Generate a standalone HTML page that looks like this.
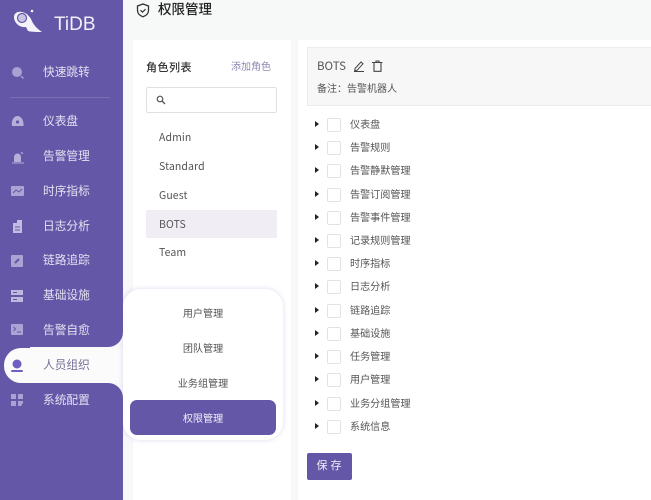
<!DOCTYPE html>
<html lang="zh">
<head>
<meta charset="utf-8">
<title>权限管理</title>
<style>
html,body{margin:0;padding:0;width:651px;height:500px;overflow:hidden;background:#f7f8f8;}
body{position:relative;font-family:"Liberation Sans","Noto Sans CJK SC",sans-serif;color:#444;}
.a{position:absolute;white-space:nowrap;}
.sb{position:absolute;left:0;width:123px;background:#6557a8;}
.nav{position:absolute;left:43px;font-size:11.7px;line-height:16px;color:#e4e1f0;white-space:nowrap;}
.ic{position:absolute;left:11px;}
.role{position:absolute;left:159px;font-family:"Noto Sans CJK SC",sans-serif;font-size:10.5px;line-height:16px;color:#555;letter-spacing:.1px;}
.t{position:absolute;left:350px;font-size:10.1px;line-height:14px;color:#555;white-space:nowrap;margin-top:1px;}
.cb{position:absolute;left:327px;width:12px;height:12px;background:#fff;border:1px solid #e2e2e2;border-radius:2px;}
.ar{position:absolute;left:315px;width:0;height:0;border-left:4px solid #222;border-top:3px solid transparent;border-bottom:3px solid transparent;}
.m{position:absolute;left:123px;width:160px;text-align:center;font-size:10.1px;line-height:14px;color:#555;margin-top:1px;}
</style>
</head>
<body>
<div class="sb" style="top:0;height:347px;border-bottom-right-radius:15px;"></div>
<div class="sb" style="top:383px;height:117px;border-top-right-radius:15px;"></div>
<div class="a" style="left:0;top:340px;width:30px;height:50px;background:#6557a8;"></div>
<div class="a" style="left:4px;top:348px;width:125px;height:35px;background:#fbfbfc;border-radius:17px 0 0 17px;"></div>

<svg class="a" style="left:13px;top:8px" width="30" height="26" viewBox="0 0 30 26">
<path d="M1 9C1 5 5 3 9 4c5 1 7 4 9 7 2 5 5 9 11 13-5 0-10 0-14-1l-2-4C7 20 1 15 1 9z" fill="#f4f3f9"/>
<circle cx="9" cy="10" r="4.500" fill="#c9c4e4" stroke="#6557a8" stroke-width="1.200"/>
<circle cx="19" cy="3" r="1.300" fill="#f4f3f9"/>
</svg>
<div class="a" style="left:54px;top:13px;font-size:19px;line-height:24px;color:#f1eff8;">TiDB</div>

<!-- nav icons -->
<svg class="ic" style="top:66px" width="14" height="14" viewBox="0 0 14 14"><circle cx="6" cy="6" r="5" fill="#a9a2d2"/><path d="M10 10l2.500 2.500" stroke="#a9a2d2" stroke-width="1.300"/></svg>
<div class="nav" style="top:65px">快速跳转</div>
<div class="a" style="left:10px;top:97px;width:100px;height:1px;background:#7a6eb4;"></div>

<svg class="ic" style="top:115px" width="14" height="13" viewBox="0 0 14 13"><path d="M1 11C0 5 3 1 6.500 1S13 5 12.500 11z" fill="#b5afd9"/><circle cx="6.500" cy="7" r="1.600" fill="#6557a8"/></svg>
<div class="nav" style="top:114px">仪表盘</div>

<svg class="ic" style="top:150px" width="14" height="14" viewBox="0 0 14 14"><path d="M3 12V7a3.500 3.500 0 0 1 7 0v5z" fill="#b5afd9"/><path d="M1 13h12M10 2l2 2" stroke="#b5afd9" stroke-width="1"/></svg>
<div class="nav" style="top:149px">告警管理</div>

<svg class="ic" style="top:186px" width="14" height="11" viewBox="0 0 14 11"><rect width="13" height="10" rx="1" fill="#aaa3d3"/><path d="M2 7l3-3 3 2 3-3" fill="none" stroke="#6557a8" stroke-width="1"/></svg>
<div class="nav" style="top:184px">时序指标</div>

<svg class="ic" style="top:220px" width="14" height="13" viewBox="0 0 14 13"><path d="M2 3h4V0h5v13H2z" fill="#c2bde0"/><path d="M4 7h5M4 10h5" stroke="#6557a8" stroke-width="1"/></svg>
<div class="nav" style="top:219px">日志分析</div>

<svg class="ic" style="top:255px" width="14" height="12" viewBox="0 0 14 12"><rect width="12" height="12" rx="1" fill="#aaa3d3"/><path d="M4 8l4-4" stroke="#6557a8" stroke-width="2"/></svg>
<div class="nav" style="top:253px">链路追踪</div>

<svg class="ic" style="top:290px" width="14" height="12" viewBox="0 0 14 12"><rect width="12" height="5" fill="#bdb8de"/><rect y="7" width="12" height="5" fill="#bdb8de"/><path d="M2 2.500h4M2 9.500h4" stroke="#6557a8"/></svg>
<div class="nav" style="top:288px">基础设施</div>

<svg class="ic" style="top:324px" width="14" height="12" viewBox="0 0 14 12"><rect width="12" height="11" rx="1" fill="#aaa3d3"/><path d="M2.500 3l2 2-2 2M6 8h4" fill="none" stroke="#6557a8"/></svg>
<div class="nav" style="top:323px">告警自愈</div>

<svg class="ic" style="top:358px" width="14" height="15" viewBox="0 0 14 15"><circle cx="6" cy="6" r="4.500" fill="#6f5fc0"/><rect x="0" y="12" width="12" height="2" rx="1" fill="#6f5fc0"/></svg>
<div class="nav" style="top:358px;color:#7a7196;">人员组织</div>

<svg class="ic" style="top:394px" width="13" height="13" viewBox="0 0 13 13"><g fill="#a9a2d2"><rect width="5" height="5"/><rect x="7" width="5" height="5"/><rect y="7" width="5" height="5"/><path d="M7 7h5v2l-2 3H7z"/></g></svg>
<div class="nav" style="top:393px">系统配置</div>

<!-- title -->
<svg class="a" style="left:136px;top:3px" width="14" height="15" viewBox="0 0 14 15"><path d="M7 1l5.500 2v4.500c0 3-2.500 5.200-5.500 6.300-3-1.100-5.500-3.300-5.500-6.300V3z" fill="none" stroke="#333" stroke-width="1.300"/><path d="M4.500 7.200l2 2 3-3" fill="none" stroke="#333" stroke-width="1.200"/></svg>
<div class="a" style="left:158px;top:1px;font-size:13.5px;line-height:18px;font-weight:500;color:#222;">权限管理</div>

<!-- role panel -->
<div class="a" style="left:133px;top:40px;width:158px;height:460px;background:#fff;"></div>
<div class="a" style="left:146px;top:61px;font-size:11px;line-height:15px;color:#333;font-weight:500;letter-spacing:.5px;">角色列表</div>
<div class="a" style="left:231px;top:61px;font-size:10px;line-height:14px;color:#8f88b5;">添加角色</div>
<div class="a" style="left:146px;top:87px;width:129px;height:24px;background:#fff;border:1px solid #e0e0e0;border-radius:2px;"></div>
<svg class="a" style="left:156px;top:95px" width="10" height="10" viewBox="0 0 10 10"><circle cx="4" cy="4" r="2.800" fill="none" stroke="#555" stroke-width="1.200"/><path d="M6 6l3 3" stroke="#555" stroke-width="1.300"/></svg>
<div class="role" style="top:130px">Admin</div>
<div class="role" style="top:159px">Standard</div>
<div class="role" style="top:188px">Guest</div>
<div class="a" style="left:146px;top:210px;width:131px;height:28px;background:#f0edf5;"></div>
<div class="role" style="top:217px">BOTS</div>
<div class="role" style="top:245px">Team</div>

<!-- right panel -->
<div class="a" style="left:298px;top:40px;width:353px;height:460px;background:#fff;"></div>
<div class="a" style="left:307px;top:47px;width:344px;height:59px;background:#f7f7f7;border:1px solid #ececec;border-right:0;box-sizing:border-box;"></div>
<div class="a" style="left:317px;top:58px;font-family:'Noto Sans CJK SC',sans-serif;font-size:11.5px;line-height:17px;color:#555;">BOTS</div>
<svg class="a" style="left:353px;top:60px" width="12" height="12" viewBox="0 0 12 12"><path d="M2 8.500L8 2l2 1.800-6 6.500-2.300.4zM1 11.500h10" fill="none" stroke="#444" stroke-width="1"/></svg>
<svg class="a" style="left:372px;top:60px" width="11" height="12" viewBox="0 0 11 12"><path d="M0 2.500h10.500M4 2.500V1h3v1.500M2 2.500v8.800h7V2.500" fill="none" stroke="#444" stroke-width="1.100"/></svg>
<div class="a" style="left:317px;top:83px;font-size:10px;line-height:14px;color:#555;">备注：告警机器人</div>

<div class="ar" style="top:121px"></div><div class="cb" style="top:118px"></div><div class="t" style="top:118px">仪表盘</div>
<div class="ar" style="top:144px"></div><div class="cb" style="top:141px"></div><div class="t" style="top:141px">告警规则</div>
<div class="ar" style="top:167px"></div><div class="cb" style="top:164px"></div><div class="t" style="top:164px">告警静默管理</div>
<div class="ar" style="top:191px"></div><div class="cb" style="top:188px"></div><div class="t" style="top:188px">告警订阅管理</div>
<div class="ar" style="top:214px"></div><div class="cb" style="top:211px"></div><div class="t" style="top:211px">告警事件管理</div>
<div class="ar" style="top:237px"></div><div class="cb" style="top:234px"></div><div class="t" style="top:234px">记录规则管理</div>
<div class="ar" style="top:260px"></div><div class="cb" style="top:257px"></div><div class="t" style="top:257px">时序指标</div>
<div class="ar" style="top:283px"></div><div class="cb" style="top:280px"></div><div class="t" style="top:280px">日志分析</div>
<div class="ar" style="top:307px"></div><div class="cb" style="top:304px"></div><div class="t" style="top:304px">链路追踪</div>
<div class="ar" style="top:330px"></div><div class="cb" style="top:327px"></div><div class="t" style="top:327px">基础设施</div>
<div class="ar" style="top:353px"></div><div class="cb" style="top:350px"></div><div class="t" style="top:350px">任务管理</div>
<div class="ar" style="top:376px"></div><div class="cb" style="top:373px"></div><div class="t" style="top:373px">用户管理</div>
<div class="ar" style="top:400px"></div><div class="cb" style="top:397px"></div><div class="t" style="top:397px">业务分组管理</div>
<div class="ar" style="top:423px"></div><div class="cb" style="top:420px"></div><div class="t" style="top:420px">系统信息</div>

<div class="a" style="left:307px;top:453px;width:45px;height:27px;background:#6557a8;border-radius:2px;color:#f1eff8;font-size:11px;line-height:27px;text-align:center;letter-spacing:3px;text-indent:2px;">保存</div>

<!-- popup -->
<div class="a" style="left:123px;top:289px;width:160px;height:151px;background:#fff;border-radius:18px;box-shadow:0 0 4px 1px rgba(120,110,190,.18);"></div>
<div class="m" style="top:307px">用户管理</div>
<div class="m" style="top:342px">团队管理</div>
<div class="m" style="top:377px">业务组管理</div>
<div class="a" style="left:130px;top:400px;width:146px;height:35px;background:#6557a8;border-radius:7px;"></div>
<div class="m" style="top:412px;color:#f1eff8;">权限管理</div>
</body>
</html>
